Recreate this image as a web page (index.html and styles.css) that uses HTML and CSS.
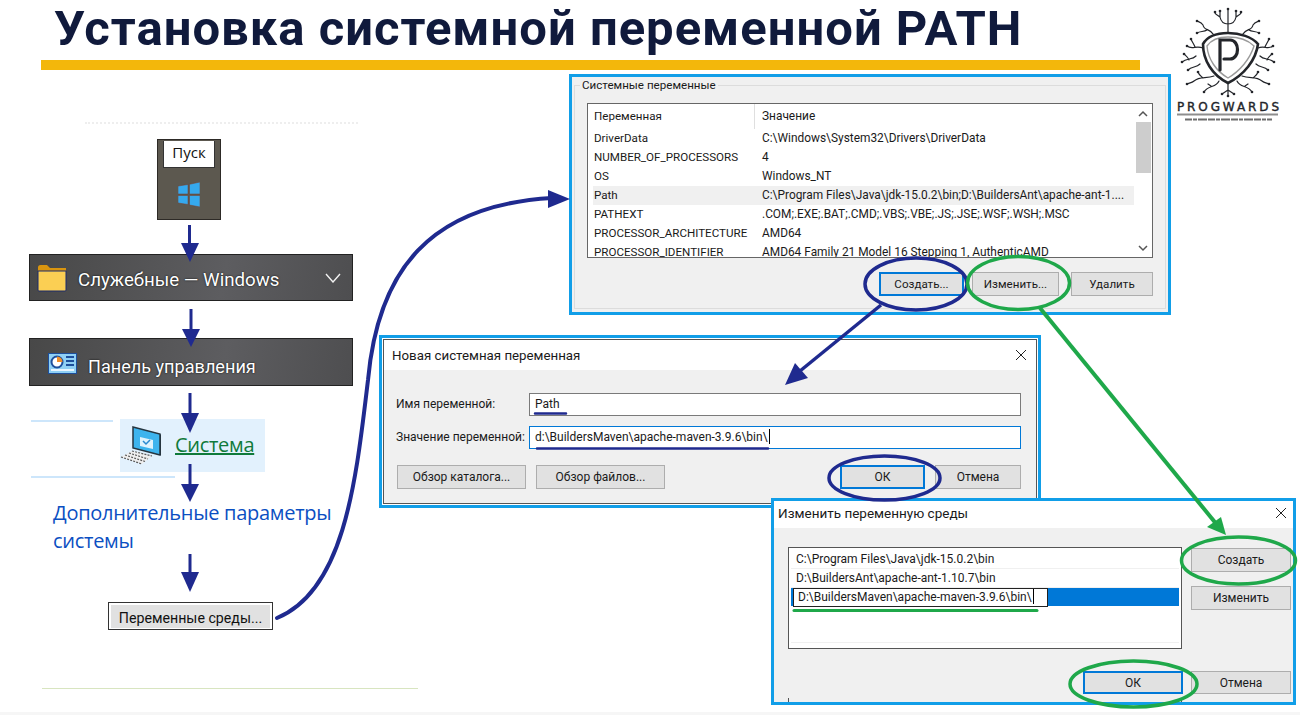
FILE: index.html
```html
<!DOCTYPE html>
<html lang="en">
<head>
    <meta charset="UTF-8">
    <meta name="viewport" content="width=device-width, initial-scale=1.0">
    <title>Установка системной переменной PATH</title>
    <link rel="stylesheet" href="styles.css">
</head>
<body>
<div class="slide">
    <header class="head">
        <h1>Установка системной переменной PATH</h1>
        <div class="head-bar"></div>
    </header>

    <svg class="logo" width="130" height="130" viewBox="0 0 130 130" fill="none" stroke="#23252a" stroke-linecap="round">
        <path d="M58 33C46 33 37 37 33 44C33 60 42 75 58 83C74 75 86 60 88 44C82 37 70 33 58 33Z" stroke-width="2.6"/>
        <path d="M58 37C48 37 41 40 37 46C38 59 46 71 58 78C70 71 80 59 84 46C78 40 68 37 58 37Z" stroke="#9a9a9a" stroke-width="1.4"/>
        <path d="M50 70V40H60C70 40 70 59 60 59H54" stroke-width="3.2"/>
        <path d="M58 33V10M58 24C54 24 51 22 50 17C48 15 46 15 45 13M50 17V12M58 24C62 24 65 22 66 17C68 15 70 15 71 13M66 17V12" stroke-width="1.2"/>
        <path d="M44 35C40 28 34 31 33 25C31 22 29 22 27 21M37 30C34 32 30 31 27 33M72 35C76 28 82 31 83 25C85 22 87 22 89 21M79 30C82 32 86 31 89 33" stroke-width="1.2"/>
        <path d="M33 48C26 45 22 50 17 46M25 47C24 44 22 42 21 39M26 56C22 60 17 58 12 62M19 60C18 57 16 56 14 54M30 64C26 68 22 66 18 70" stroke-width="1.2"/>
        <path d="M88 48C94 45 98 50 103 46M95 47C96 44 98 42 99 39M90 56C94 60 99 58 104 62M97 60C98 57 100 56 102 54M86 64C90 68 94 66 98 70" stroke-width="1.2"/>
        <path d="M44 76C36 79 30 76 24 81C22 83 19 83 17 84M33 78C31 76 29 75 28 72M49 81C46 88 38 85 34 92M41 86L38 84M72 76C80 79 86 76 92 81C94 83 97 83 99 84M83 78C85 76 87 75 88 72M67 81C70 88 78 85 82 92M75 86L78 84M58 84V95M58 90L52 94M58 90L64 94" stroke-width="1.2"/>
        <g fill="#23252a" stroke="none">
            <circle cx="45" cy="12" r="1.3"/><circle cx="50" cy="11" r="1.3"/><circle cx="58" cy="9" r="1.3"/><circle cx="66" cy="11" r="1.3"/><circle cx="71" cy="12" r="1.3"/>
            <circle cx="27" cy="21" r="1.3"/><circle cx="27" cy="33" r="1.3"/><circle cx="89" cy="21" r="1.3"/><circle cx="89" cy="33" r="1.3"/>
            <circle cx="17" cy="46" r="1.3"/><circle cx="21" cy="39" r="1.3"/><circle cx="12" cy="62" r="1.3"/><circle cx="14" cy="54" r="1.3"/><circle cx="18" cy="70" r="1.3"/>
            <circle cx="103" cy="46" r="1.3"/><circle cx="99" cy="39" r="1.3"/><circle cx="104" cy="62" r="1.3"/><circle cx="102" cy="54" r="1.3"/><circle cx="98" cy="70" r="1.3"/>
            <circle cx="17" cy="84" r="1.3"/><circle cx="28" cy="72" r="1.3"/><circle cx="34" cy="92" r="1.3"/><circle cx="99" cy="84" r="1.3"/><circle cx="88" cy="72" r="1.3"/><circle cx="82" cy="92" r="1.3"/><circle cx="52" cy="94" r="1.3"/><circle cx="64" cy="94" r="1.3"/><circle cx="58" cy="96" r="1.3"/>
        </g>
        <text class="logo-name" x="7" y="111" textLength="102" lengthAdjust="spacing">PROGWARDS</text>
        <path d="M7 114.500H108" stroke="#8d8d8d" stroke-width="2" stroke-linecap="butt"/>
        <path d="M15 119.500H102" stroke="#6d6d6d" stroke-width="2" stroke-linecap="butt" stroke-dasharray="7 1 4 1 9 1"/>
    </svg>

    <div class="ghost-line"></div>

    <!-- left column: start menu path -->
    <div class="steps">
        <div class="start-btn">
            <div class="start-tip">Пуск</div>
            <svg class="start-icon" width="22" height="25" viewBox="0 0 22 25">
                <path d="M0 4L10 2.500V12H0Z M11.500 2.300L22 0V12H11.500Z M0 13.500H10V22.500L0 21Z M11.500 13.500H22V25L11.500 23Z" fill="#35a9ee" stroke="#7a3a28" stroke-width=".5"/>
            </svg>
        </div>

        <div class="menu-row">
            <svg class="folder" width="30" height="28" viewBox="0 0 30 28">
                <path d="M1 3.500Q1 1 3.500 1H10L13 4H29V7H1Z" fill="#d9950f"/>
                <path d="M1 7H29V26Q29 27 28 27H2Q1 27 1 26Z" fill="#fbcf53" stroke="#1b2a6e" stroke-width="1"/>
            </svg>
            <span class="menu-text">Служебные — Windows</span>
            <svg class="chevron" width="16" height="10" viewBox="0 0 16 10" fill="none" stroke="#f2f2f2" stroke-width="1.400"><path d="M1 1L8 9L15 1"/></svg>
        </div>

        <div class="menu-row menu-row-cp">
            <svg class="cp-icon" width="29" height="21" viewBox="0 0 29 21">
                <rect x=".5" y=".5" width="28" height="20" fill="#8fd0f5" stroke="#1d4f9c"/>
                <circle cx="9" cy="9" r="5.500" fill="#fff" stroke="#1d4f9c" stroke-width="2"/>
                <path d="M9 9V3.500A5.500 5.500 0 0 1 14.500 9Z" fill="#ef8f2a"/>
                <path d="M18 4H26M18 8H26M18 12H26" stroke="#1d4f9c" stroke-width="2"/>
                <path d="M3 17H26" stroke="#e8f6ff" stroke-width="2"/>
            </svg>
            <span class="menu-text">Панель управления</span>
        </div>

        <div class="system-row">
            <svg class="pc-icon" width="42" height="40" viewBox="0 0 42 40">
                <path d="M13 1L40 8V29L13 22Z" fill="#3db4ee" stroke="#26353f" stroke-width="1.500"/>
                <path d="M40 8L41 9V29L40 29Z" fill="#26353f"/>
                <path d="M20 11L33 14V23L20 20Z" fill="#dff3fd"/>
                <path d="M23 15L26 18L30 14" fill="none" stroke="#2a8ad0" stroke-width="1.500"/>
                <path d="M1 31L12 25L32 30L22 38Z" fill="#efefef"/>
                <path d="M1 31L22 38M5 29L25 35.500M9 27L28 33M12 25L32 30" stroke="#5c5c5c" stroke-width="1.200" stroke-dasharray="2 1.200"/>
            </svg>
            <a class="system-link">Система</a>
        </div>

        <div class="advanced">Дополнительные параметры<br>системы</div>

        <div class="env-btn"><span>Переменные среды...</span></div>
    </div>
    <div class="rule rule-a"></div>
    <div class="rule rule-b"></div>
    <div class="rule-bottom"></div>

    <!-- system variables -->
    <section class="win win-vars">
        <div class="group">
            <span class="group-title">Системные переменные</span>
            <div class="list">
                <div class="list-body">
                    <div class="list-row list-head"><span>Переменная</span><span>Значение</span></div>
                    <div class="list-row"><span>DriverData</span><span>C:\Windows\System32\Drivers\DriverData</span></div>
                    <div class="list-row"><span>NUMBER_OF_PROCESSORS</span><span>4</span></div>
                    <div class="list-row"><span>OS</span><span>Windows_NT</span></div>
                    <div class="list-row is-picked"><span>Path</span><span>C:\Program Files\Java\jdk-15.0.2\bin;D:\BuildersAnt\apache-ant-1....</span></div>
                    <div class="list-row"><span>PATHEXT</span><span>.COM;.EXE;.BAT;.CMD;.VBS;.VBE;.JS;.JSE;.WSF;.WSH;.MSC</span></div>
                    <div class="list-row"><span>PROCESSOR_ARCHITECTURE</span><span>AMD64</span></div>
                    <div class="list-row"><span>PROCESSOR_IDENTIFIER</span><span>AMD64 Family 21 Model 16 Stepping 1, AuthenticAMD</span></div>
                </div>
                <div class="scroll">
                    <svg width="18" height="12" viewBox="0 0 18 12" fill="none" stroke="#555" stroke-width="1.500"><path d="M5 8L9 4L13 8"/></svg>
                    <div class="scroll-thumb"></div>
                    <svg class="scroll-down" width="18" height="12" viewBox="0 0 18 12" fill="none" stroke="#555" stroke-width="1.500"><path d="M5 4L9 8L13 4"/></svg>
                </div>
            </div>
            <div class="vars-btns">
                <button class="btn btn-focus btn-new">Создать...</button>
                <button class="btn btn-edit">Изменить...</button>
                <button class="btn btn-del">Удалить</button>
            </div>
        </div>
    </section>

    <!-- new variable dialog -->
    <section class="win win-new">
        <div class="win-inner">
            <div class="titlebar">
                <span>Новая системная переменная</span>
                <svg width="12" height="12" viewBox="0 0 12 12" stroke="#222" fill="none"><path d="M1 1L11 11M11 1L1 11"/></svg>
            </div>
            <div class="new-body">
                <div class="field">
                    <label>Имя переменной:</label>
                    <div class="input">Path</div>
                </div>
                <div class="field">
                    <label>Значение переменной:</label>
                    <div class="input input-focus">d:\BuildersMaven\apache-maven-3.9.6\bin\<i class="caret"></i></div>
                </div>
                <div class="new-btns">
                    <button class="btn btn-browse">Обзор каталога...</button>
                    <button class="btn btn-browse">Обзор файлов...</button>
                    <button class="btn btn-focus btn-ok">ОК</button>
                    <button class="btn btn-cancel">Отмена</button>
                </div>
            </div>
        </div>
    </section>

    <!-- edit variable dialog -->
    <section class="win win-edit">
        <div class="titlebar titlebar-edit">
            <span>Изменить переменную среды</span>
            <svg width="12" height="12" viewBox="0 0 12 12" stroke="#222" fill="none"><path d="M1 1L11 11M11 1L1 11"/></svg>
        </div>
        <div class="edit-body">
            <div class="edit-main">
                <div class="paths">
                    <div class="path-row">C:\Program Files\Java\jdk-15.0.2\bin</div>
                    <div class="path-row">D:\BuildersAnt\apache-ant-1.10.7\bin</div>
                    <div class="path-row path-active"><div class="path-input">D:\BuildersMaven\apache-maven-3.9.6\bin\<i class="caret"></i></div></div>
                    <div class="path-last"></div>
                </div>
                <div class="edit-side">
                    <button class="btn">Создать</button>
                    <button class="btn">Изменить</button>
                </div>
            </div>
            <div class="edit-btns">
                <button class="btn btn-focus">ОК</button>
                <button class="btn">Отмена</button>
            </div>
        </div>
    </section>

    <!-- arrows, rings and underlines over everything -->
    <svg class="marks" width="1300" height="715" viewBox="0 0 1300 715" fill="none">
        <g stroke="#1f2a8f" fill="#1f2a8f">
            <path d="M189.500 225V246" stroke-width="3"/><path d="M181 243H199L190 262Z" stroke="none"/>
            <path d="M191 309V332" stroke-width="3"/><path d="M182 329H200L191 347Z" stroke="none"/>
            <path d="M190 393V415" stroke-width="3"/><path d="M181 413H199L190 433Z" stroke="none"/>
            <path d="M190 464V486" stroke-width="3"/><path d="M181 484H199L190 502Z" stroke="none"/>
            <path d="M190 554V575" stroke-width="3"/><path d="M181 572H199L190 592Z" stroke="none"/>
            <path d="M548 190L570 199L548 208Z" stroke="none"/>
            <path d="M881 305L800 371" stroke-width="3.500"/><path d="M795 363L808 378L785 385Z" stroke="none"/>
        </g>
        <path d="M277 618C345 590 356 480 368 380C378 270 430 205 552 198" stroke="#1f2a8f" stroke-width="4" stroke-linecap="round"/>
        <path d="M1040 308L1218 526" stroke="#1fa84a" stroke-width="4"/>
        <path d="M1207 527L1221 517L1226 535Z" fill="#1fa84a"/>
        <ellipse cx="916" cy="284" rx="51" ry="26" stroke="#1f2a8f" stroke-width="3.500"/>
        <ellipse cx="1018.500" cy="283" rx="51" ry="26.500" stroke="#1fa84a" stroke-width="3.500"/>
        <ellipse cx="884.500" cy="478" rx="55.500" ry="22" stroke="#1f2a8f" stroke-width="3.500"/>
        <ellipse cx="1238.500" cy="560.500" rx="57" ry="23.500" stroke="#1fa84a" stroke-width="3.500"/>
        <ellipse cx="1133.500" cy="684" rx="63.500" ry="23" stroke="#1fa84a" stroke-width="3.500"/>
        <path d="M535 413.500H566M537 448.500H768" stroke="#1f2a8f" stroke-width="2.500" stroke-linecap="round"/>
        <path d="M794 610.500H1037" stroke="#1fa84a" stroke-width="3" stroke-linecap="round"/>
    </svg>
</div>
</body>
</html>
```

FILE: styles.css
```css
* {
    box-sizing: border-box;
}
html, body {
    margin: 0;
    background: #f6f6f6;
}
.slide {
    position: relative;
    width: 1300px;
    height: 712px;
    overflow: hidden;
    background: #fff;
    font-family: Roboto, sans-serif;
    color: #1a1a1a;
}

/* heading */
.head {
    padding: 0 160px 0 41px;
}
.head h1 {
    margin: 0 0 0 13px;
    font-size: 49px;
    line-height: 58px;
    letter-spacing: 1px;
    font-weight: 700;
    color: #101a3c;
    white-space: nowrap;
}
.head-bar {
    height: 10px;
    margin-top: 2px;
    background: #f3b70b;
}
.logo {
    position: absolute;
    left: 1170px;
    top: 0;
}
.logo-name {
    font: 400 12px "DejaVu Sans", sans-serif;
    fill: #23252a;
    stroke: #23252a;
    stroke-width: .4px;
}
.ghost-line {
    position: absolute;
    left: 85px;
    top: 122px;
    width: 273px;
    border-top: 2px dotted #eeeeee;
}

/* left steps */
.steps {
    position: absolute;
    left: 29px;
    top: 139px;
    width: 324px;
    display: flex;
    flex-direction: column;
}
.start-btn {
    width: 64px;
    height: 81px;
    margin-left: 128px;
    border: 1px solid #2d2a26;
    background: #5c584f;
    display: flex;
    flex-direction: column;
    align-items: center;
}
.start-tip {
    width: 52px;
    height: 27px;
    margin-top: 1px;
    background: #fff;
    border: 1px solid #333;
    border-top: 0;
    text-align: center;
    font: 15px/23px "Open Sans", sans-serif;
    color: #111;
}
.start-icon {
    margin-top: 14px;
}
.menu-row {
    height: 47px;
    margin-top: 34px;
    padding: 0 10px 0 7px;
    display: flex;
    align-items: center;
    border: 1px solid #222;
    background: linear-gradient(100deg, #484848, #5d5d60 60%, #4e4e50);
    color: #fff;
}
.menu-row-cp {
    height: 48px;
    margin-top: 37px;
    padding-left: 18px;
}
.menu-text {
    margin-left: 11px;
    padding-top: 4px;
    font-size: 18.700px;
    text-shadow: 0 0 2px #000;
}
.menu-row-cp .menu-text {
    padding-top: 8px;
    font-size: 18.100px;
}
.cp-icon {
    margin-top: 2px;
}
.chevron {
    margin-left: auto;
    margin-right: 1px;
}
.system-row {
    width: 145px;
    height: 53px;
    margin: 33px 0 0 91px;
    display: flex;
    align-items: center;
    background: #e2f1fd;
}
.system-link {
    margin: 0 0 2px 13px;
    font: 20px "Open Sans", sans-serif;
    letter-spacing: -.3px;
    color: #0f7a3a;
    text-decoration: underline;
}
.advanced {
    margin: 27px 0 0 24px;
    font: 20px/28px "Open Sans", sans-serif;
    letter-spacing: -.28px;
    white-space: nowrap;
    color: #0b4fc2;
}
.env-btn {
    width: 165px;
    height: 28px;
    margin: 47px 0 0 79px;
    border: 1px solid #333;
    background: #fff;
    padding: 2px;
}
.env-btn span {
    display: block;
    height: 23px;
    background: #e1e1e1;
    text-align: center;
    font: 14.200px/26px Roboto, sans-serif;
    color: #111;
}
.rule {
    position: absolute;
    left: 31px;
    height: 2px;
    background: #cde6fb;
}
.rule-a {
    top: 420px;
    width: 82px;
}
.rule-b {
    top: 476px;
    width: 144px;
}
.rule-bottom {
    position: absolute;
    left: 42px;
    top: 688px;
    width: 376px;
    height: 1px;
    background: #d8e5c0;
}

/* windows */
.win {
    position: absolute;
    border: 3px solid #119ee8;
    background: #f0f0f0;
    font-size: 12px;
}
.btn {
    height: 24px;
    padding: 0;
    border: 1px solid #adadad;
    background: #e1e1e1;
    font: 12px Roboto, sans-serif;
    color: #1a1a1a;
}
.btn-focus {
    border: 2px solid #0078d7;
}
.titlebar {
    height: 30px;
    padding: 0 9px 0 8px;
    display: flex;
    align-items: center;
    justify-content: space-between;
    background: #fff;
    font-size: 13.300px;
}
.caret {
    display: inline-block;
    width: 1px;
    height: 15px;
    margin-left: 1px;
    vertical-align: -3px;
    background: #000;
}

.win-vars {
    left: 569px;
    top: 74px;
    width: 602px;
    height: 241px;
    padding: 8px 2px 3px;
    font-size: 11.600px;
}
.group {
    position: relative;
    height: 100%;
    padding: 17px 12px 0;
    border: 1px solid #dcdcdc;
}
.group-title {
    position: absolute;
    left: 5px;
    top: -8px;
    padding: 0 2px;
    background: #f0f0f0;
    line-height: 15px;
}
.list {
    height: 155px;
    display: flex;
    background: #fff;
    border: 1px solid #666;
    overflow: hidden;
}
.list-body {
    flex: 1;
    padding-left: 5px;
}
.list-row {
    height: 19px;
    padding-left: 1px;
    display: grid;
    grid-template-columns: 168px 1fr;
    line-height: 19px;
    white-space: nowrap;
}
.list-row span + span {
    font-size: 11.900px;
}
.list-head {
    height: 25px;
    line-height: 25px;
    background: linear-gradient(#dfdfdf, #dfdfdf) 161px 0 / 1px 25px no-repeat;
}
.is-picked {
    background: #f0f0f0;
}
.scroll {
    width: 18px;
    padding-top: 4px;
    display: flex;
    flex-direction: column;
    align-items: center;
    background: #fff;
}
.scroll-thumb {
    width: 15px;
    height: 51px;
    margin-top: 2px;
    background: #cdcdcd;
}
.scroll-down {
    margin-top: 69px;
}
.vars-btns {
    margin-top: 14px;
    display: flex;
    justify-content: flex-end;
}
.vars-btns .btn {
    font-size: 11.600px;
}
.btn-new {
    width: 85px;
}
.btn-edit {
    width: 87px;
    margin-left: 8px;
}
.btn-del {
    width: 82px;
    margin-left: 12px;
}

.win-new {
    left: 379px;
    top: 335px;
    width: 662px;
    height: 173px;
    padding: 1px;
    background: #fff;
}
.win-inner {
    height: 100%;
    border: 1px solid #555;
    background: #f0f0f0;
}
.new-body {
    padding: 23px 15px 0 12px;
}
.field {
    height: 22px;
    margin-bottom: 11px;
    display: flex;
    align-items: center;
}
.field label {
    width: 133px;
}
.input {
    flex: 1;
    height: 23px;
    padding-left: 5px;
    border: 1px solid #7a7a7a;
    background: #fff;
    line-height: 21px;
}
.input-focus {
    border-color: #0078d7;
}
.new-btns {
    margin-top: 17px;
    margin-left: 1px;
    display: flex;
}
.btn-browse {
    width: 129px;
    margin-right: 10px;
}
.btn-ok {
    width: 85px;
    margin-left: 165px;
}
.btn-cancel {
    width: 86px;
    margin-left: 10px;
}

.win-edit {
    left: 771px;
    top: 498px;
    width: 525px;
    height: 207px;
}
.titlebar-edit {
    height: 27px;
    padding: 0 6px 3px 4px;
    font-size: 13.500px;
}
.edit-body {
    height: 174px;
    padding: 19px 2px 0 14px;
    background:
        linear-gradient(#555, #555) 14px 100% / 1px 4px no-repeat,
        linear-gradient(#555, #555) 407px 100% / 1px 4px no-repeat;
}
.edit-main {
    display: flex;
    align-items: flex-start;
}
.paths {
    width: 394px;
    height: 102px;
    padding: 2px 2px 0;
    border: 1px solid #555;
    background: #fff;
}
.path-row {
    height: 19px;
    padding-left: 5px;
    line-height: 18px;
    border-bottom: 1px solid #f0f0f0;
}
.path-active {
    height: 18px;
    padding-left: 2px;
    border: 0;
    background: #0078d7;
}
.path-input {
    width: 255px;
    height: 19px;
    padding-left: 4px;
    border: 1px solid #222;
    background: #fff;
    line-height: 17px;
}
.path-last {
    height: 37px;
    border-bottom: 1px solid #f0f0f0;
}
.edit-side {
    width: 100px;
    margin-left: 9px;
    padding-top: 1px;
    display: flex;
    flex-direction: column;
    gap: 14px;
}
.edit-btns {
    margin: 22px 0 0 295px;
    display: flex;
    gap: 8px;
}
.edit-btns .btn {
    width: 100px;
    height: 23px;
}

.marks {
    position: absolute;
    left: 0;
    top: 0;
    pointer-events: none;
}
```
